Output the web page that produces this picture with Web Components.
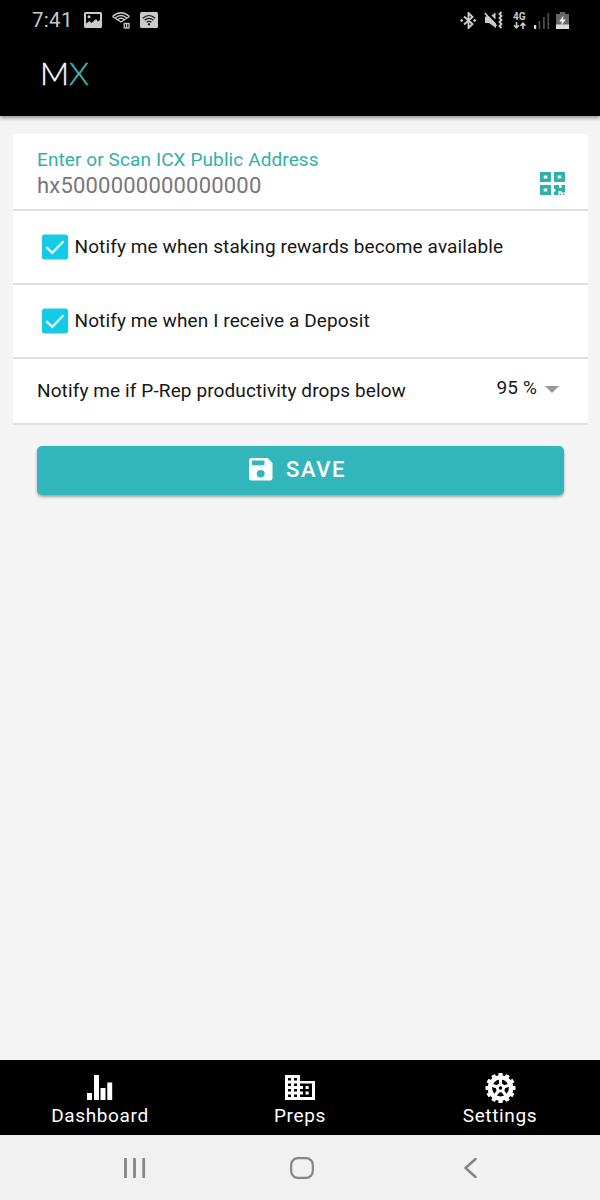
<!DOCTYPE html>
<html lang="en">
<head>
<meta charset="utf-8">
<title>MX Settings</title>
<style>
html,body{margin:0;height:100%}
body{background:#f4f4f4;font-family:Roboto,"Liberation Sans",sans-serif;color:#161616}
</style>
</head>
<body>
<mx-app></mx-app>
<script>
const gear = () => {
  let teeth = '';
  for (let i = 0; i < 12; i++) teeth += `<rect x="13.4" y="0" width="4.2" height="5" rx=".6" transform="rotate(${i * 30} 15.5 15)"/>`;
  let spokes = '';
  for (let i = 0; i < 5; i++) spokes += `<path d="M15.5 15V5" transform="rotate(${i * 72} 15.5 15)"/>`;
  return `<g fill="currentColor">${teeth}</g><circle cx="15.5" cy="15" r="10.6" fill="none" stroke="currentColor" stroke-width="4.4"/><g stroke="currentColor" stroke-width="3.2">${spokes}</g><circle cx="15.5" cy="15" r="4.6" fill="currentColor"/><circle cx="15.5" cy="15" r="1.8" fill="#000"/>`;
};
const ICONS = {
  picture: [18, 16, '<path fill="currentColor" fill-rule="evenodd" d="M1.500 0h15Q18 0 18 1.500v13Q18 16 16.500 16h-15Q0 16 0 14.500v-13Q0 0 1.500 0zM2 2v9.500l3.500-2.500 2 2L12 7l2 2.500 2-1.500V2zM5 3.300a1.500 1.500 0 1 1 0 3 1.500 1.500 0 0 1 0-3z"/>'],
  wificall: [18, 17, '<g fill="none" stroke="currentColor" stroke-width="1.300"><path d="M.5 4.500Q9-3 17.500 4.500M3.200 6Q9 1 14.800 6M5.500 7.800Q9 4.600 12.500 7.800M.5 4.500l8.500 5.500 8.500-5.500"/><rect x="12.200" y="11.500" width="4.800" height="4.500"/><path d="M14.600 11.500V16"/></g>'],
  wifibox: [18, 16, '<rect width="18" height="16" rx="1.500" fill="currentColor"/><g fill="none" stroke="#111" stroke-width="1.200"><path d="M2.800 6.200Q9 .8 15.200 6.200M4.600 8.300Q9 4.500 13.400 8.300M6.600 10.300Q9 8.300 11.400 10.300"/></g><circle cx="9" cy="12.300" r="1.100"/>'],
  bluetooth: [17, 17, '<path d="M4 4.500l8.500 7.500-4 4V1l4 4-8.500 7.500" fill="none" stroke="currentColor" stroke-width="1.900"/><path d="M0 8.500L1.700 6.800 3.400 8.500 1.700 10.200zM13 8.500l1.700-1.700 1.700 1.700-1.700 1.700z" fill="currentColor"/>'],
  mute: [19, 18, '<path d="M1 5.500h4l7 7V17l-7-5H1z" fill="currentColor"/><path d="M7.500 4.500l4-3v7z" fill="currentColor"/><path d="M.8 2l11.700 13" stroke="currentColor" stroke-width="1.700"/><path d="M17.500 1l-2 2 2 2-2 2 2 2-2 2 2 2-2 2 2 2" fill="none" stroke="currentColor" stroke-width="1.800"/>'],
  arrows: [14, 7, '<path d="M3.500 0v5.500M1 3.300l2.500 2.500L6 3.300M10 7V1.200M7.500 3.700L10 1.200l2.500 2.500" fill="none" stroke="currentColor" stroke-width="1.600"/>'],
  signal: [16, 17, '<path d="M0 13h2.200v4H0z" fill="#ddd"/><path d="M4.500 9h1.800v8H4.500zM9 5h1.800v12H9zM13.400 1h1.800v16h-1.800z" fill="#4b4b4b"/>'],
  battery: [13, 17, '<path d="M3.800 0h5.400v2H13v15H0V2h3.800z" fill="#666"/><path d="M0 12.500h13V17H0z" fill="#ddd"/><path d="M7.500 3.500L3 9.500h2.800L5 13.500l5-6H7z" fill="#eee"/>'],
  qr: [26, 24, '<path fill="currentColor" fill-rule="evenodd" d="M0 0h11v10H0zM3.700 3.500v3h3.600v-3zM14 0h11v10H14zM17.700 3.500v3h3.600v-3zM0 13h11v10H0zM3.700 16.500v3h3.600v-3z"/><path fill="currentColor" d="M14 13h5v3h2.500v-3H25v7.500h-3.500V19h-3v4H14v-3.500h1.500V17H14zM19.500 21.800H21V23h-1.500zM22.800 21.800h1.700V23h-1.700z"/>'],
  check: [26, 26, '<rect width="26" height="25" y=".5" rx="2.500" fill="#13cbe4"/><path d="M4.300 13.200l6 5.700L21.500 7.200" fill="none" stroke="#eafcff" stroke-width="2.300"/>'],
  caret: [14, 7, '<path d="M0 0h14L7 7z" fill="#999"/>'],
  save: [24, 23, '<path fill="currentColor" fill-rule="evenodd" d="M2.500 0H18.500L23.500 5V20.500Q23.500 22.500 21.500 22.500h-19Q0 22.500 0 20.500v-18Q0 0 2.500 0zM3 2.500v4.700h12.500V2.500zM11.700 12a4 3.700 0 1 0 0 7.400 4 3.700 0 0 0 0-7.400z"/>'],
  bars: [26, 26, '<path fill="currentColor" d="M0 18h5v7H0zM7 0h5v25H7zM13.500 13h5v12h-5zM20.300 7.500h4.900V25h-4.900z"/>'],
  building: [30, 26, '<path fill="currentColor" d="M0 0h15v6h15v19H0z"/><path fill="#000" d="M3 3h3v2.500H3zM9 3h3v2.500H9zM3 8.500h3V11H3zM9 8.500h3V11H9zM3 14h3v2.500H3zM9 14h3v2.500H9zM3 19.500h3V22H3zM9 19.500h3V22H9zM15 8.500h12V22H15z"/><path fill="currentColor" d="M15 11h3v3h-3zM15 16.500h3v3h-3zM20.500 11h3.200v3h-3.200zM20.500 16.500h3.200v3h-3.200z"/>'],
  gear: [31, 30, gear()],
  recents: [22, 20, '<path d="M1.500 1v18M10.500 1v18M19.700 1v18" stroke="currentColor" stroke-width="2.800" stroke-linecap="round"/>'],
  home: [24, 22, '<rect x="1.200" y="1.200" width="21.600" height="19.600" rx="6.500" fill="none" stroke="currentColor" stroke-width="2.200"/>'],
  back: [13, 20, '<path d="M11.500 1L1.500 10l10 9" fill="none" stroke="currentColor" stroke-width="2.500" stroke-linecap="round"/>']
};
const define = (name, html) => customElements.define(name, class extends HTMLElement {
  constructor() {
    super();
    this.attachShadow({mode: 'open'}).innerHTML = html;
  }
});
customElements.define('mx-icon', class extends HTMLElement {
  connectedCallback() {
    if (this.shadowRoot) return;
    const [w, h, body] = ICONS[this.getAttribute('name')];
    this.attachShadow({mode: 'open'}).innerHTML = `<style>:host{display:block;flex:none}svg{display:block}</style><svg width="${w}" height="${h}" viewBox="0 0 ${w} ${h}">${body}</svg>`;
  }
});
define('status-bar', `<style>
:host{display:flex;height:40px;box-sizing:border-box;padding:0 31px 0 32px;align-items:center;color:#cbcbcb}
time{font-size:20.500px;line-height:24px;width:52px;letter-spacing:.3px}
.left,.right{display:flex;align-items:center}
.left{gap:10px}.right{margin-left:auto}
.net{width:14px;margin:0 7px 0 10px;font:700 10px/10px Roboto,sans-serif}
</style><time>7:41</time><div class="left"><mx-icon name="picture"></mx-icon><mx-icon name="wificall"></mx-icon><mx-icon name="wifibox"></mx-icon></div>
<div class="right"><mx-icon name="bluetooth"></mx-icon><mx-icon name="mute" style="margin-left:7px"></mx-icon><div class="net">4G<mx-icon name="arrows"></mx-icon></div><mx-icon name="signal"></mx-icon><mx-icon name="battery" style="margin-left:6px"></mx-icon></div>`);
define('app-header', `<style>
:host{display:block;height:76px;box-sizing:border-box;padding:14px 0 0 40px}
.logo{font:300 32px/38px Lato,sans-serif;color:#fff;-webkit-text-stroke:.4px currentColor}
.logo span{color:#3cb9b5}
</style><div class="logo">M<span>X</span></div>`);
define('setting-row', `<style>
:host{display:flex;align-items:center;box-sizing:border-box;height:74px;padding:0 24px;border-bottom:2px solid #dfdfdf;font-size:19px;line-height:24px;letter-spacing:.11px;white-space:nowrap}
</style><slot></slot>`);
define('address-field', `<style>
:host{display:flex;flex:1;justify-content:space-between;padding-top:5px}
label{display:block;color:#35b0a9;font-size:19px;line-height:24px;letter-spacing:.1px}
.value{color:#777;font-size:22px;line-height:28px;letter-spacing:.2px}
mx-icon{color:#2fb0aa;margin:24px -2px 0 0}
</style><div><label>Enter or Scan ICX Public Address</label><div class="value">hx5000000000000000</div></div><mx-icon name="qr"></mx-icon>`);
define('check-option', `<style>
:host{display:flex;align-items:center;gap:6.500px;padding-left:5px}
</style><mx-icon name="check"></mx-icon><span><slot></slot></span>`);
define('percent-select', `<style>
:host{display:flex;align-items:center;gap:8px;margin:-7px 5px 0 auto}
mx-icon{margin-top:4px}
</style><span><slot></slot></span><mx-icon name="caret"></mx-icon>`);
define('save-button', `<style>
:host{display:flex;align-items:center;justify-content:center;gap:13px;height:49px;margin:21px 24px 0;border-radius:5px;background:#33b6bb;color:#fff;box-shadow:0 2px 3px #0005;box-sizing:border-box;padding:0 6px 2px 0;font-size:22px;font-weight:500;letter-spacing:1.600px}
</style><mx-icon name="save"></mx-icon><span><slot></slot></span>`);
define('tab-item', `<style>
:host{display:flex;flex-direction:column;align-items:center;width:200px;font-size:19px;line-height:24px;letter-spacing:.65px}
.icon{height:32px;display:flex;align-items:center}
</style><div class="icon"><slot name="icon"></slot></div><span><slot></slot></span>`);
define('tab-bar', `<style>
:host{display:flex;height:75px;box-sizing:border-box;padding-top:12px;background:#000;color:#fff}
</style><slot></slot>`);
define('system-nav', `<style>
:host{display:flex;align-items:center;height:65px;box-sizing:border-box;padding:1px 123px 0 124px;justify-content:space-between;background:#f1f1f1;color:#858585}
</style><mx-icon name="recents"></mx-icon><mx-icon name="home" style="margin-right:6px"></mx-icon><mx-icon name="back"></mx-icon>`);
define('mx-app', `<style>
:host{display:flex;flex-direction:column;height:1200px;width:600px;background:#f4f4f4}
header{background:#000;box-shadow:0 2px 4px #0006;flex:none}
main{flex:1;padding:18px 12px 0 13px}
.card{background:#fff}
</style>
<header><status-bar></status-bar><app-header></app-header></header>
<main><div class="card">
<setting-row style="height:77px"><address-field></address-field></setting-row>
<setting-row><check-option>Notify me when staking rewards become available</check-option></setting-row>
<setting-row><check-option>Notify me when I receive a Deposit</check-option></setting-row>
<setting-row style="height:66px"><span>Notify me if P-Rep productivity drops below</span><percent-select>95 %</percent-select></setting-row>
</div><save-button>SAVE</save-button></main>
<tab-bar><tab-item><mx-icon slot="icon" name="bars"></mx-icon>Dashboard</tab-item><tab-item><mx-icon slot="icon" name="building"></mx-icon>Preps</tab-item><tab-item><mx-icon slot="icon" name="gear"></mx-icon>Settings</tab-item></tab-bar>
<system-nav></system-nav>`);
</script>
</body>
</html>
